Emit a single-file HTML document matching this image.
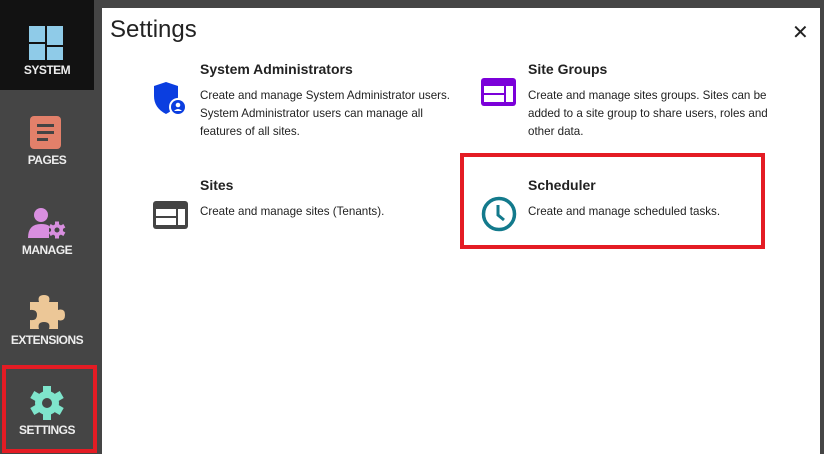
<!DOCTYPE html>
<html><head><style>
*{margin:0;padding:0;box-sizing:border-box}
body{width:824px;height:454px;background:#454545;font-family:"Segoe UI","Liberation Sans",sans-serif;position:relative;overflow:hidden}
.tile{position:absolute;left:0;width:94px;height:90px;text-align:center;color:#eee;font-weight:bold;font-size:12px;letter-spacing:-0.5px}
.tile svg{position:absolute;left:29px;top:26px}
.tile span{position:absolute;left:0;right:0;top:63px}
#panel{position:absolute;left:102px;top:8px;width:718px;height:446px;background:#fff}
h1{position:absolute;left:8px;top:8px;font-size:24px;font-weight:normal;color:#222}
.x{position:absolute;left:690px;top:12px;font-size:20px;color:#222}
.item{position:absolute;font-size:11.6px;color:#222;line-height:18px;white-space:nowrap}
.item b{display:block;font-size:14px;font-weight:600;margin-bottom:9px;line-height:18px}
.ic{position:absolute}
.red{position:absolute;border:4px solid #e41c24}
</style></head><body>
<div class="tile" style="top:0;background:#121212">
<svg width="36" height="34"><rect x="0" y="0" width="16" height="16" fill="#8fcbe8"/><rect x="18" y="0" width="16" height="19" fill="#8fcbe8"/><rect x="0" y="18" width="16" height="16" fill="#8fcbe8"/><rect x="18" y="21" width="16" height="13" fill="#8fcbe8"/></svg><span>SYSTEM</span></div>
<div class="tile" style="top:90px">
<svg width="36" height="34"><rect x="1" y="0" width="31" height="33" rx="4" fill="#e2806a"/><rect x="8" y="8" width="17" height="3" fill="#444"/><rect x="8" y="15" width="17" height="3" fill="#444"/><rect x="8" y="22" width="11" height="3" fill="#444"/></svg><span>PAGES</span></div>
<div class="tile" style="top:180px">
<svg width="40" height="34" style="left:27px"><circle cx="14" cy="9" r="7" fill="#d98fe0"/><path d="M1 32 Q1 18 14 18 Q20 18 22 20 L22 32Z" fill="#d98fe0"/><g transform="translate(30 24)" fill="#d98fe0"><circle r="6"/><rect x="-2" y="-8.5" width="4" height="17"/><rect x="-2" y="-8.5" width="4" height="17" transform="rotate(60)"/><rect x="-2" y="-8.5" width="4" height="17" transform="rotate(120)"/><circle r="2.5" fill="#454545"/></g></svg><span>MANAGE</span></div>
<div class="tile" style="top:270px">
<svg width="40" height="36" style="left:27px;top:24px"><path d="M3 8 H12 Q10 1 17 1 Q24 1 22 8 H31 V16 Q38 14 38 21 Q38 28 31 26 V35 H22 Q24 28 17 28 Q10 28 12 35 H3 V26 Q10 27 10 21 Q10 15 3 16Z" fill="#ecc797"/></svg><span>EXTENSIONS</span></div>
<div class="tile" style="top:360px">
<svg width="36" height="36" viewBox="-18 -18 36 36" style="top:25px"><g fill="#7fe5cc"><circle r="12"/><rect x="-4" y="-17" width="8" height="34"/><rect x="-4" y="-17" width="8" height="34" transform="rotate(60)"/><rect x="-4" y="-17" width="8" height="34" transform="rotate(120)"/></g><circle r="5" fill="#454545"/></svg><span>SETTINGS</span></div>
<div class="red" style="left:2px;top:365px;width:95px;height:88px"></div>
<div id="panel">
<h1>Settings</h1><div class="x">✕</div>
<svg class="ic" style="left:51px;top:74px" width="36" height="34"><path d="M1 4 L13 0 L25 4 V14 Q25 26 13 32 Q1 26 1 14Z" fill="#0b3ee0"/><circle cx="25" cy="25" r="9" fill="#fff"/><circle cx="25" cy="25" r="7" fill="#0b3ee0"/><circle cx="25" cy="23" r="2.3" fill="#fff"/><path d="M21 29 Q25 25 29 29Z" fill="#fff"/></svg>
<div class="item" style="left:98px;top:52px"><b>System Administrators</b>Create and manage System Administrator users.<br>System Administrator users can manage all<br>features of all sites.</div>
<svg class="ic" style="left:51px;top:193px" width="36" height="28"><rect x="0" y="0" width="35" height="28" rx="3" fill="#444"/><rect x="3" y="8" width="20" height="7" fill="#fff"/><rect x="3" y="17" width="20" height="7" fill="#fff"/><rect x="25" y="8" width="7" height="16" fill="#fff"/></svg>
<div class="item" style="left:98px;top:168px"><b>Sites</b>Create and manage sites (Tenants).</div>
<svg class="ic" style="left:379px;top:70px" width="36" height="28"><rect x="0" y="0" width="35" height="28" rx="3" fill="#7b00d9"/><rect x="3" y="8" width="20" height="7" fill="#fff"/><rect x="3" y="17" width="20" height="7" fill="#fff"/><rect x="25" y="8" width="7" height="16" fill="#fff"/></svg>
<div class="item" style="left:426px;top:52px"><b>Site Groups</b>Create and manage sites groups. Sites can be<br>added to a site group to share users, roles and<br>other data.</div>
<svg class="ic" style="left:379px;top:188px" width="36" height="36"><circle cx="18" cy="18" r="15.5" fill="none" stroke="#137a8c" stroke-width="3.5"/><path d="M17 9 V19 L23 24" fill="none" stroke="#137a8c" stroke-width="3"/></svg>
<div class="item" style="left:426px;top:168px"><b>Scheduler</b>Create and manage scheduled tasks.</div>
</div>
<div class="red" style="left:460px;top:153px;width:305px;height:96px"></div>
</body></html>
